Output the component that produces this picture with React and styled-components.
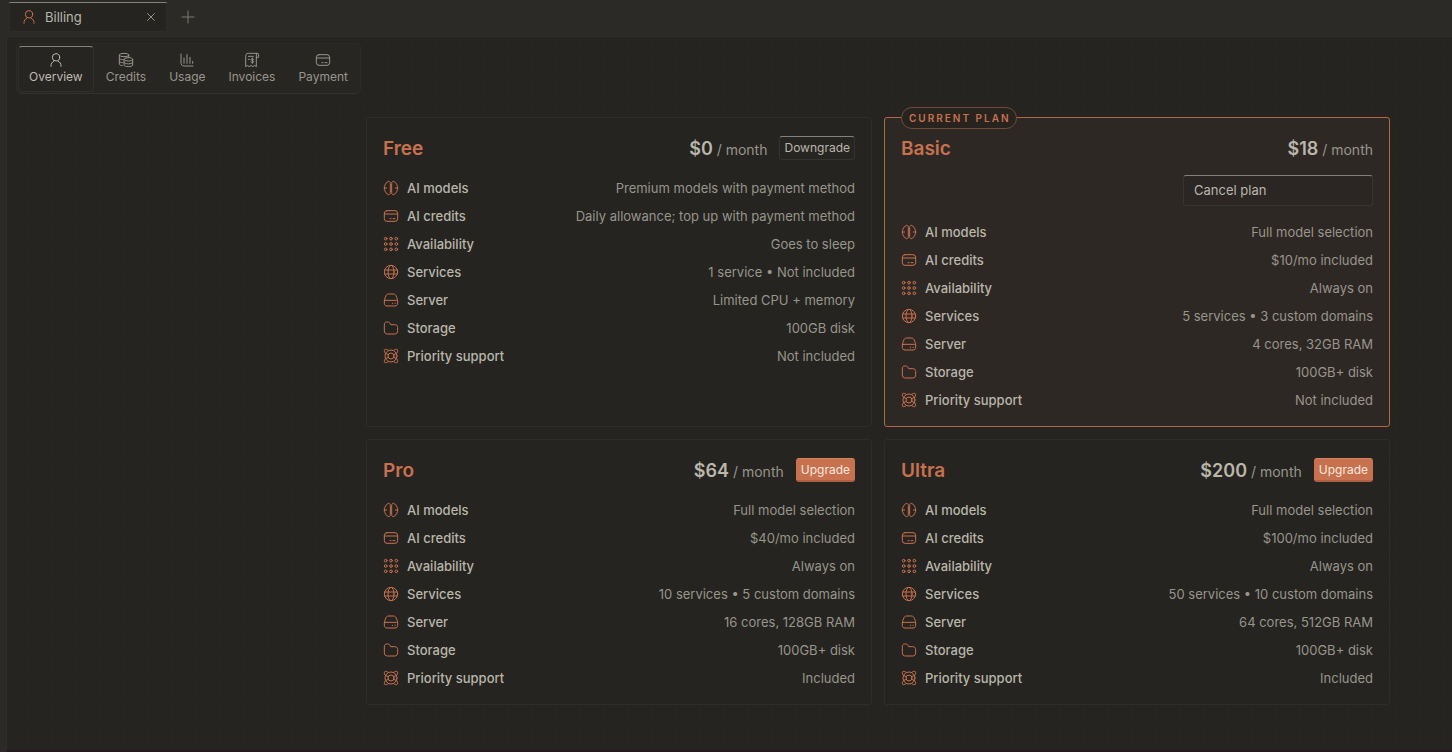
import React from 'react';
import styled, { createGlobalStyle, css } from 'styled-components';

const GlobalStyle = createGlobalStyle`
  *, *::before, *::after { box-sizing: border-box; }
  body {
    margin: 0;
    background: #2b2a26;
    color: #b9b6aa;
    font-family: "Inter", "Liberation Sans", sans-serif;
    font-size: 13px;
    line-height: 20px;
  }
  button { font: inherit; color: inherit; cursor: pointer; margin: 0; }
  h2, dl, dt, dd, p { margin: 0; }
`;

const Page = styled.div`
  min-height: 100vh;
  display: flex;
  flex-direction: column;
`;

const TabBar = styled.div`
  display: flex;
  align-items: flex-start;
  height: 36px;
  padding: 2px 0 0 9px;
`;

const Tab = styled.div`
  display: flex;
  align-items: center;
  gap: 8px;
  width: 158px;
  height: 30px;
  padding: 0 9px 0 11px;
  background: #252420;
  border: 1px solid #2d2c28;
  border-top-color: #84827a;
`;

const TabTitle = styled.span`
  flex: 1;
`;

const IconButton = styled.button`
  display: grid;
  place-items: center;
  width: ${(p) => p.$size}px;
  height: ${(p) => p.$size}px;
  padding: 0;
  border: 0;
  background: none;
  color: ${(p) => (p.$dim ? '#7b7870' : '#b9b6aa')};
`;

const NewTab = styled.div`
  display: flex;
  align-items: center;
  height: 30px;
  margin-left: 13px;
`;

const Panel = styled.div`
  flex: 1;
  display: flex;
  align-items: flex-start;
  margin-left: 6px;
  padding: 6px 62px 40px 9px;
  border: 1px solid #2f2e2a;
  border-right: 0;
  border-bottom: 2px solid #241b20;
  background: radial-gradient(circle at 3px 3px, #272622 1px, transparent 1px) 0 0 / 6px 6px #252420;
`;

const Side = styled.div`
  flex: 0 0 350px;
  min-width: 0;
`;

const Nav = styled.nav`
  display: inline-flex;
  gap: 1px;
  padding: 2px 1px 1px;
  border: 1px solid #2c2b27;
  border-bottom-color: #33322e;
  border-radius: 5px;
  background: #272622;
`;

const NavItem = styled.button`
  display: flex;
  flex-direction: column;
  align-items: center;
  gap: 1px;
  height: 46px;
  padding: 5px 10px;
  border: 1px solid transparent;
  border-radius: 4px;
  background: none;
  color: #98958b;
  font-size: 12px;
  line-height: 16px;
  ${(p) =>
    p.$active &&
    css`
      color: #bebbb0;
      background: #262522;
      border-color: #302f2c;
      border-top-color: #84827a;
    `}
`;

const Plans = styled.main`
  flex: 1;
  display: grid;
  grid-template-columns: repeat(2, minmax(0, 1fr));
  gap: 12px;
  padding-top: 74px;
`;

const Card = styled.section`
  position: relative;
  padding: 16px;
  border: 1px solid ${(p) => (p.$current ? '#b0674b' : '#2e2d29')};
  border-radius: 3px;
  background: ${(p) => (p.$current ? '#2e2825' : '#252420')};
`;

const Badge = styled.span`
  position: absolute;
  top: -11px;
  left: 16px;
  height: 22px;
  padding: 0 5px 0 7px;
  border: 1px solid #70493a;
  border-radius: 11px;
  background: #272420;
  color: #c8714f;
  font-size: 10px;
  font-weight: 600;
  line-height: 20px;
  letter-spacing: 2px;
  text-transform: uppercase;
`;

const CardHeader = styled.header`
  display: flex;
  align-items: flex-start;
  height: 28px;
`;

const PlanName = styled.h2`
  flex: 1;
  color: #c8714f;
  font-size: 19px;
  line-height: 30px;
  font-weight: 600;
`;

const Price = styled.p`
  color: #98958b;
  font-size: 14px;
  line-height: 30px;
`;

const Amount = styled.strong`
  color: #b9b6aa;
  font-size: 18px;
  font-weight: 600;
`;

const Action = styled.button`
  height: 24px;
  margin: 2px 0 0 12px;
  padding: 0 4px;
  border: 1px solid #343330;
  border-top-color: #84827a;
  border-radius: 3px;
  background: #262522;
  font-size: 12px;
  line-height: 20px;
  ${(p) =>
    p.$primary &&
    css`
      background: #c8714f;
      color: #f6e9df;
      border-color: #c8714f;
      border-top-color: #d5835f;
      border-bottom: 2px solid #ae6043;
    `}
`;

const CancelRow = styled.div`
  display: flex;
  justify-content: flex-end;
  margin-top: 13px;
`;

const CancelButton = styled.button`
  width: 190px;
  height: 31px;
  padding: 0 10px 2px;
  border: 1px solid #393431;
  border-top-color: #84807a;
  border-radius: 3px;
  background: #2b2624;
  text-align: left;
`;

const Features = styled.dl`
  display: flex;
  flex-direction: column;
  gap: 8px;
  margin-top: 16px;
`;

const Feature = styled.div`
  display: flex;
  align-items: center;
  justify-content: space-between;
  height: 20px;
`;

const Term = styled.dt`
  display: flex;
  align-items: center;
  gap: 8px;
  font-weight: 500;
`;

const Value = styled.dd`
  color: #98958b;
`;

const Svg = styled.svg`
  flex: none;
  display: block;
  fill: none;
  stroke: ${(p) => (p.$accent ? '#c8714f' : 'currentColor')};
  stroke-width: 1.5;
  stroke-linecap: round;
  stroke-linejoin: round;
`;

const card = (
  <>
    <rect x="2" y="4" width="20" height="16" rx="4" />
    <path d="M2 9h20M10.5 16H12M15 16h3" />
  </>
);

const drawings = {
  user: (
    <>
      <circle cx="12" cy="8" r="5.5" />
      <path d="M4.5 21.5v-1c0-3 1.7-5.4 4.2-6.8M19.5 21.5v-1c0-3-1.7-5.4-4.2-6.8" />
    </>
  ),
  coins: (
    <>
      <ellipse cx="9" cy="4.500" rx="7" ry="2.500" />
      <path d="M16 4.500V8M2 4.500V18c0 1.200 2 2.200 4.500 2.500M2 9c0 1.300 2 2.300 4.500 2.500M2 13.500c0 1.300 2 2.300 4.500 2.500" />
      <ellipse cx="15.500" cy="11" rx="6.500" ry="2.500" />
      <path d="M9 11v8.500c0 1.400 2.900 2.500 6.500 2.500s6.500-1.100 6.500-2.500V11M9 15.300c0 1.400 2.900 2.500 6.500 2.500s6.500-1.100 6.500-2.500" />
    </>
  ),
  chart: <path d="M3 3v12c0 4 1 6 5 6h13M7.500 9v8M12 4v13M16.500 8v9M20.500 14v3" />,
  invoice: (
    <>
      <path d="M18.500 8h3.200c.3-1 .3-2.500.3-3.500A2.300 2.300 0 0 0 19.700 2H6.500C3.500 2 2.500 3.500 2.500 7v15l2.700-1.800L7.800 22l2.700-1.800L13.200 22l2.600-1.800 2.700 1.800V4.500A2 2 0 0 1 20 2" />
      <path d="M6.500 6.500H14M6.500 11H8M14.500 11c-.5-.7-1.200-1-2-1-1 0-1.800.5-1.800 1.400 0 2 3.800 1 3.800 3 0 .9-.9 1.500-2 1.500-.9 0-1.600-.4-2-1M12.600 9v8" />
    </>
  ),
  card,
  brain: (
    <path d="M11 4.500C11 3 9.900 2 8.400 2 7 2 6 3 5.900 4.300 4 4.600 3 6 3.300 7.700 2.300 8.600 1.800 10 2 12c-.2 2 .3 3.400 1.300 4.300C3 18 4 19.400 5.900 19.700 6 21 7 22 8.400 22c1.500 0 2.600-1 2.600-2.500zM13 4.500C13 3 14.100 2 15.600 2c1.400 0 2.400 1 2.500 2.300C20 4.600 21 6 20.700 7.700c1 .9 1.500 2.300 1.300 4.300.2 2-.3 3.400-1.300 4.300.3 1.700-.7 3.100-2.600 3.400-.1 1.300-1.100 2.300-2.500 2.300-1.500 0-2.600-1-2.600-2.500zM2 12h3.500M22 12h-3.500" />
  ),
  grid: [4, 12, 20].map((y) =>
    [4, 12, 20].map((x) => <circle key={`${x}-${y}`} cx={x} cy={y} r="2" />)
  ),
  globe: (
    <>
      <circle cx="12" cy="12" r="10" />
      <ellipse cx="12" cy="12" rx="4.500" ry="10" />
      <path d="M2.500 9h19M2.500 15h19" />
    </>
  ),
  server: (
    <>
      <path d="M2 13.500c0-3 1.500-5.500 2.500-8C5.300 3.800 6.500 3 8.500 3h7c2 0 3.200.8 4 2.500 1 2.500 2.500 5 2.500 8" />
      <path d="M3.500 12.500h17c1 0 1.500.6 1.500 1.500v3c0 2.500-1.500 4-4 4H6c-2.500 0-4-1.500-4-4v-3c0-.9.500-1.500 1.500-1.500zM14 17h.5M18 17h.5" />
    </>
  ),
  folder: (
    <path d="M2 7c0-2.500 1-4 3.500-4H7c2 0 3 .8 3.700 2.300L11.500 7H17c3.500 0 5 1.500 5 4.500V16c0 3.500-1.500 5-5 5H7c-3.500 0-5-1.500-5-5z" />
  ),
  support: (
    <>
      <circle cx="12" cy="12" r="9" />
      <circle cx="12" cy="12" r="4.500" />
      <path d="M8 3.500C6 2 3.500 1.500 2.500 2.500S2 6 3.500 8L8 10M16 3.500C18 2 20.500 1.500 21.500 2.500s.5 3.500-1 5.500L16 10M8 20.500C6 22 3.500 22.500 2.500 21.500s-.5-3.500 1-5.500L8 14M16 20.500c2 1.500 4.500 2 5.500 1s.5-3.500-1-5.500L16 14" />
    </>
  ),
  close: <path d="M5 5l14 14M19 5L5 19" />,
  plus: <path d="M12 3v18M3 12h18" />,
};

const Icon = ({ name, size = 16, accent }) => (
  <Svg width={size} height={size} viewBox="0 0 24 24" $accent={accent} aria-hidden="true">
    {drawings[name]}
  </Svg>
);

const navItems = [
  ['Overview', 'user'],
  ['Credits', 'coins'],
  ['Usage', 'chart'],
  ['Invoices', 'invoice'],
  ['Payment', 'card'],
];

const features = [
  ['AI models', 'brain'],
  ['AI credits', 'card'],
  ['Availability', 'grid'],
  ['Services', 'globe'],
  ['Server', 'server'],
  ['Storage', 'folder'],
  ['Priority support', 'support'],
];

const plans = [
  {
    name: 'Free',
    price: '$0',
    action: 'Downgrade',
    values: [
      'Premium models with payment method',
      'Daily allowance; top up with payment method',
      'Goes to sleep',
      '1 service • Not included',
      'Limited CPU + memory',
      '100GB disk',
      'Not included',
    ],
  },
  {
    name: 'Basic',
    price: '$18',
    current: true,
    values: [
      'Full model selection',
      '$10/mo included',
      'Always on',
      '5 services • 3 custom domains',
      '4 cores, 32GB RAM',
      '100GB+ disk',
      'Not included',
    ],
  },
  {
    name: 'Pro',
    price: '$64',
    action: 'Upgrade',
    values: [
      'Full model selection',
      '$40/mo included',
      'Always on',
      '10 services • 5 custom domains',
      '16 cores, 128GB RAM',
      '100GB+ disk',
      'Included',
    ],
  },
  {
    name: 'Ultra',
    price: '$200',
    action: 'Upgrade',
    values: [
      'Full model selection',
      '$100/mo included',
      'Always on',
      '50 services • 10 custom domains',
      '64 cores, 512GB RAM',
      '100GB+ disk',
      'Included',
    ],
  },
];

const PlanCard = ({ plan }) => (
  <Card $current={plan.current}>
    {plan.current && <Badge>Current plan</Badge>}
    <CardHeader>
      <PlanName>{plan.name}</PlanName>
      <Price>
        <Amount>{plan.price}</Amount> / month
      </Price>
      {plan.action && <Action $primary={plan.action === 'Upgrade'}>{plan.action}</Action>}
    </CardHeader>
    {plan.current && (
      <CancelRow>
        <CancelButton>Cancel plan</CancelButton>
      </CancelRow>
    )}
    <Features>
      {features.map(([label, icon], i) => (
        <Feature key={label}>
          <Term>
            <Icon name={icon} accent />
            {label}
          </Term>
          <Value>{plan.values[i]}</Value>
        </Feature>
      ))}
    </Features>
  </Card>
);

export default function App() {
  return (
    <Page>
      <GlobalStyle />
      <TabBar>
        <Tab>
          <Icon name="user" accent />
          <TabTitle>Billing</TabTitle>
          <IconButton $size={12} aria-label="Close tab">
            <Icon name="close" size={12} />
          </IconButton>
        </Tab>
        <NewTab>
          <IconButton $size={16} $dim aria-label="New tab">
            <Icon name="plus" />
          </IconButton>
        </NewTab>
      </TabBar>
      <Panel>
        <Side>
          <Nav>
            {navItems.map(([label, icon]) => (
              <NavItem key={label} $active={label === 'Overview'}>
                <Icon name={icon} />
                {label}
              </NavItem>
            ))}
          </Nav>
        </Side>
        <Plans>
          {plans.map((plan) => (
            <PlanCard key={plan.name} plan={plan} />
          ))}
        </Plans>
      </Panel>
    </Page>
  );
}
